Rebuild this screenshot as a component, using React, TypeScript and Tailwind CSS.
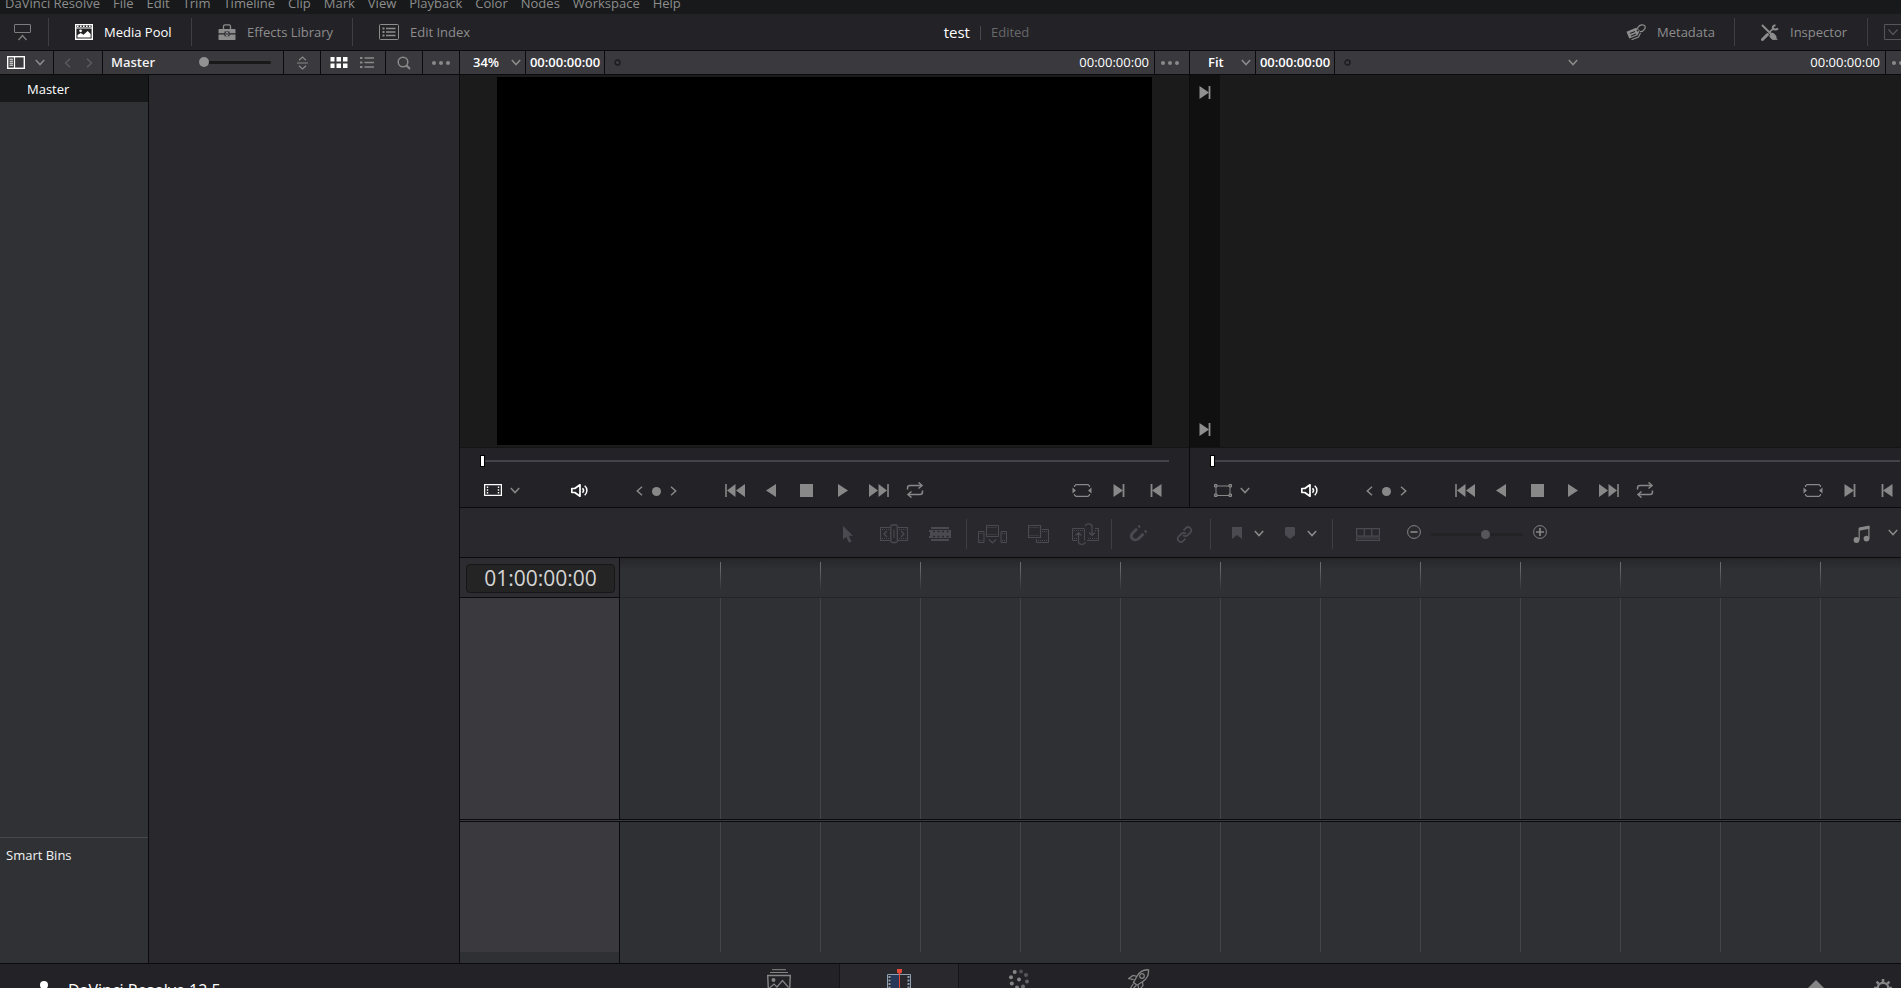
import type { ReactNode } from "react";

type IconProps = { w: number; h: number; children: ReactNode; className?: string };

function Icon({ w, h, children, className = "" }: IconProps) {
  return (
    <svg
      width={w}
      height={h}
      viewBox={`0 0 ${w} ${h}`}
      fill="none"
      stroke="currentColor"
      aria-hidden="true"
      className={`shrink-0 ${className}`}
    >
      {children}
    </svg>
  );
}

const Chevron = ({ className = "text-[#8c8c8c]" }: { className?: string }) => (
  <Icon w={10} h={7} className={className}>
    <path d="M.8 1 5 5.6 9.2 1" strokeWidth="1.5" />
  </Icon>
);

const Dots = () => (
  <Icon w={18} h={4} className="text-[#8a8a8a]">
    <g fill="currentColor" stroke="none">
      <circle cx="2" cy="2" r="2" />
      <circle cx="9" cy="2" r="2" />
      <circle cx="16" cy="2" r="2" />
    </g>
  </Icon>
);

const PoolIcon = () => (
  <Icon w={18} h={16}>
    <path d="M.7.5h16.6v14.8H.7z" strokeWidth="1.4" />
    <path d="M2 2.2h14" strokeWidth="1.6" strokeDasharray="1.6 1.4" />
    <path d="M.7 4h16.6" strokeWidth="1" />
    <path d="M2.5 13.5V11l3.2-2 2.8 1.8 4.2-3.9 2.9 3v3.6z" fill="currentColor" stroke="none" />
    <circle cx="5.6" cy="6.8" r="1.4" fill="currentColor" stroke="none" />
  </Icon>
);

const ToolboxIcon = () => (
  <Icon w={18} h={16}>
    <path d="M5.5 5V2.4C5.5 1.2 6 .8 7 .8h4c1 0 1.5.4 1.5 1.6V5" strokeWidth="1.3" />
    <path d="M1.5 5h15c.7 0 1 .4 1 1v3.3h-6V7.5h-5v1.8h-6V6c0-.6.3-1 1-1z" fill="currentColor" stroke="none" />
    <path d="M.5 10.5h6v1.7h5v-1.7h6V15c0 .6-.3 1-1 1h-15c-.7 0-1-.4-1-1z" fill="currentColor" stroke="none" />
    <path d="M8 8.5h2v3H8z" />
  </Icon>
);

const IndexIcon = () => (
  <Icon w={20} h={16}>
    <rect x=".5" y=".5" width="19" height="15" rx="1" />
    <path d="M3.5 4.5h2M3.5 8h2M3.5 11.5h2" strokeWidth="1.8" />
    <path d="M7 4.5h9.5M7 8h9.5M7 11.5h9.5" strokeWidth="1.5" />
  </Icon>
);

const TagIcon = () => (
  <Icon w={20} h={17}>
    <path d="M.5 7.8 10 3.8l3.800 2.600-2.200 4.800-8.300 3.200z" fill="currentColor" stroke="none" />
    <path d="m4 9.5 5-2M5 12l5-2" stroke="#232227" strokeWidth="1.2" />
    <path d="M5.5 15.800 12.5 13l2-4" strokeWidth="1.100" />
    <path d="M11.5 6.500C11 3.500 13 1 16 .8c3-.2 4 2.200 2.500 4.400-1 1.500-2.800 2.800-4.500 2.300" strokeWidth="1.200" />
    <circle cx="11.6" cy="6.600" r="1" fill="#232227" stroke="none" />
  </Icon>
);

const ToolsIcon = () => (
  <Icon w={18} h={17}>
    <path d="m1 1 9.500 9.500" strokeWidth="1.900" />
    <path d="M9.800 9.300c1-.8 2.600-.5 3.500.4l2.200 2.500-.2 1.600 1.500 2-5 .2c-1.700-1.200-3.200-2.800-3.600-4z" fill="currentColor" stroke="none" />
    <path d="m1.500 15.500 5-5" strokeWidth="3" strokeLinecap="round" />
    <path d="m8.500 8 4-3.700" strokeWidth="1.700" />
    <path d="M14.500 1.200c-1.900.2-3 1.500-2.600 3.100.4 1.500 3.600 1.900 5 .1" strokeWidth="2" />
  </Icon>
);

const NextEdit = () => (
  <Icon w={12} h={13}>
    <path d="M.5 0v13L10 6.500z" fill="currentColor" stroke="none" />
    <path d="M10.500 0v13" strokeWidth="1.800" />
  </Icon>
);
const PrevEdit = () => (
  <Icon w={12} h={13}>
    <path d="M11.500 0v13L2 6.500z" fill="currentColor" stroke="none" />
    <path d="M1.500 0v13" strokeWidth="1.800" />
  </Icon>
);

const iconButton = "flex h-8 shrink-0 items-center justify-center";
const barCell = "flex h-full shrink-0 items-center border-r border-[#0b0b0d]";

function ToolbarButton({ label, icon, className }: { label: string; icon: ReactNode; className: string }) {
  return (
    <button type="button" className={`flex h-7 shrink-0 items-center gap-[11px] pl-[26px] whitespace-nowrap ${className}`}>
      {icon}
      <span className="pt-[2px]">{label}</span>
    </button>
  );
}

const menus = ["DaVinci Resolve", "File", "Edit", "Trim", "Timeline", "Clip", "Mark", "View", "Playback", "Color", "Nodes", "Workspace", "Help"];

function MenuBar() {
  return (
    <nav className="flex h-[14px] shrink-0 items-end gap-[13px] overflow-hidden bg-[#17191a] pb-px pl-[5px] text-[13px] leading-5 text-[#8d8d8d]">
      {menus.map((m) => (
        <button type="button" key={m} className="whitespace-nowrap">
          {m}
        </button>
      ))}
    </nav>
  );
}

function TopBar() {
  return (
    <header className="grid h-[37px] shrink-0 grid-cols-[1fr_auto_1fr] items-center border-b border-[#0b0b0d] bg-[#232227] text-[13px] text-[#8d8d8d]">
      <div className="flex items-center">
        <button type="button" aria-label="Full height" className="flex h-7 w-[49px] items-center border-r border-[#3f3e43] pl-[14px]">
          <Icon w={18} h={17} className="text-[#7d7d7d]">
            <rect x=".5" y=".5" width="16" height="8" rx=".5" />
            <path d="m4.500 16 4-4.500 4 4.500" strokeWidth="1.400" />
          </Icon>
        </button>
        <ToolbarButton label="Media Pool" icon={<PoolIcon />} className="w-[143px] border-r border-[#3f3e43] text-white" />
        <ToolbarButton label="Effects Library" icon={<ToolboxIcon />} className="w-[161px] border-r border-[#3f3e43]" />
        <ToolbarButton label="Edit Index" icon={<IndexIcon />} className="w-[140px]" />
      </div>
      <div className="flex items-center pt-px pl-[53px]">
        <h1 className="text-[15px] font-medium text-white">test</h1>
        <span className="mx-[10px] h-[14px] w-px bg-[#48474c]" />
        <span className="text-[#68686a]">Edited</span>
      </div>
      <div className="flex items-center justify-end">
        <ToolbarButton label="Metadata" icon={<TagIcon />} className="w-[135px] border-r border-[#3f3e43]" />
        <ToolbarButton label="Inspector" icon={<ToolsIcon />} className="w-[133px] border-r border-[#3f3e43]" />
        <button type="button" aria-label="Expand" className="flex h-7 w-[52px] items-center pl-4">
          <Icon w={18} h={16} className="text-[#55555a]">
            <path d="M.5.5h17v15H.5z" />
            <path d="m4.500 5.500 4.500 5 4.500-5" strokeWidth="1.300" />
          </Icon>
        </button>
      </div>
    </header>
  );
}

function PoolBar() {
  return (
    <div className="flex h-6 shrink-0 border-b border-[#0b0b0d] bg-[#39393e] text-[#8a8a8a]">
      <button type="button" aria-label="Bin list" className={`${barCell} w-[54px] gap-[10px] pl-[7px]`}>
        <Icon w={18} h={13} className="text-white">
          <rect x=".7" y=".7" width="16.600" height="11.600" strokeWidth="1.400" />
          <path d="M7.500.5v12" strokeWidth="1.200" />
          <path d="M2.500 3.200H6M2.500 5.200H6M2.500 7.200H6M2.500 9.200H6" />
        </Icon>
        <Chevron />
      </button>
      <div className={`${barCell} w-[49px] gap-[15px] pl-[10px] text-[#5c5d61]`}>
        <button type="button" aria-label="Back">
          <Icon w={7} h={10}>
            <path d="M6 .8 1.500 5 6 9.200" strokeWidth="1.400" />
          </Icon>
        </button>
        <button type="button" aria-label="Forward">
          <Icon w={7} h={10}>
            <path d="M1 .8 5.500 5 1 9.200" strokeWidth="1.400" />
          </Icon>
        </button>
      </div>
      <div className={`${barCell} w-[181px] justify-between pr-3 pl-2`}>
        <h2 className="text-[13px] font-semibold text-[#f2f2f2]">Master</h2>
        <input
          type="range"
          aria-label="Thumbnail size"
          defaultValue={0}
          className="h-[10px] w-[72px] appearance-none bg-transparent [&::-webkit-slider-runnable-track]:h-[3px] [&::-webkit-slider-runnable-track]:rounded-full [&::-webkit-slider-runnable-track]:bg-[#19191a] [&::-webkit-slider-thumb]:-mt-1 [&::-webkit-slider-thumb]:size-[10px] [&::-webkit-slider-thumb]:appearance-none [&::-webkit-slider-thumb]:rounded-full [&::-webkit-slider-thumb]:bg-[#929292]"
        />
      </div>
      <button type="button" aria-label="Sort" className={`${barCell} w-[37px] justify-center`}>
        <Icon w={11} h={14}>
          <path d="M0 7h11M2 4.200 5.500 1 9 4.200M2 9.800 5.500 13 9 9.800" strokeWidth="1.200" />
        </Icon>
      </button>
      <div className={`${barCell} w-[65px] gap-3 pl-[9px]`}>
        <button type="button" aria-label="Thumbnail view">
          <Icon w={18} h={11} className="text-white">
            <g fill="currentColor" stroke="none">
              <path d="M.5 0h4v4.500h-4zM6.500 0h4.500v4.500H6.500zM13 0h4.500v4.500H13zM.5 6.500h4V11h-4zM6.500 6.500h4.500V11H6.500zM13 6.500h4.500V11H13z" />
            </g>
          </Icon>
        </button>
        <button type="button" aria-label="List view">
          <Icon w={14} h={11}>
            <path d="M0 1h2.500M0 5.500h2.500M0 10h2.500" strokeWidth="1.800" />
            <path d="M4.500 1H14M4.500 5.500H14M4.500 10H14" strokeWidth="1.500" />
          </Icon>
        </button>
      </div>
      <button type="button" aria-label="Search" className={`${barCell} w-[37px] justify-center`}>
        <Icon w={14} h={14}>
          <circle cx="6" cy="6" r="4.800" strokeWidth="1.500" />
          <path d="m9.300 9.300 3.700 3.700" strokeWidth="2" />
        </Icon>
      </button>
      <button type="button" aria-label="Pool options" className="flex flex-1 items-center justify-center">
        <Dots />
      </button>
    </div>
  );
}

function MediaPool() {
  return (
    <aside className="flex w-[460px] shrink-0 flex-col border-r border-[#0b0b0d]">
      <PoolBar />
      <div className="flex min-h-0 flex-1">
        <div className="flex w-[149px] shrink-0 flex-col border-r border-[#0b0b0d] bg-[#2f3135] text-[13px] text-[#f2f2f2]">
          <button type="button" className="h-[27px] shrink-0 bg-[#17191a] pt-[2px] pl-[27px] text-left text-white">
            Master
          </button>
          <div className="flex-1" />
          <section className="h-[126px] shrink-0 border-t border-[#46474b] px-[6px] pt-2">
            <h3>Smart Bins</h3>
          </section>
        </div>
        <div className="flex-1 bg-[#29282d]" />
      </div>
    </aside>
  );
}

function ViewerBar({ zoom, name, picker }: { zoom: string; name: string; picker: boolean }) {
  return (
    <div className="flex h-6 shrink-0 border-b border-[#0b0b0d] bg-[#39393e] text-[13px] text-white">
      <div className={`${barCell} relative w-[66px]`}>
        <select
          aria-label={`${name} zoom`}
          defaultValue={zoom}
          className={`h-full w-full appearance-none bg-transparent font-semibold ${picker ? "pl-[18px]" : "pl-[13px]"}`}
        >
          <option>{zoom}</option>
        </select>
        <span className="pointer-events-none absolute inset-y-0 right-1 flex items-center">
          <Chevron />
        </span>
      </div>
      <span className={`${barCell} w-[79px] justify-center font-semibold`}>00:00:00:00</span>
      <div className={`${barCell} flex-1 !shrink justify-between pr-[5px] pl-[9px]`}>
        <Icon w={7} h={7} className="text-[#1c1c1e]">
          <circle cx="3.500" cy="3.500" r="2.500" strokeWidth="1.400" />
        </Icon>
        {picker && (
          <button type="button" aria-label="Choose timeline" className="mr-4">
            <Chevron />
          </button>
        )}
        <span className="font-medium">00:00:00:00</span>
      </div>
      <button type="button" aria-label={`${name} options`} className="flex w-[34px] shrink-0 items-center pl-[6px]">
        <Dots />
      </button>
    </div>
  );
}

function Transport({ mode, name }: { mode: ReactNode; name: string }) {
  return (
    <div className="flex h-[61px] shrink-0 flex-col border-y border-t-[#141416] border-b-[#0b0b0d] bg-[#232227] text-[#888888]">
      <input
        type="range"
        aria-label={`${name} position`}
        defaultValue={0}
        className="mx-[20px] mt-[7px] h-3 appearance-none bg-transparent [&::-webkit-slider-runnable-track]:h-[2px] [&::-webkit-slider-runnable-track]:bg-[#43444b] [&::-webkit-slider-thumb]:-mt-[5px] [&::-webkit-slider-thumb]:h-3 [&::-webkit-slider-thumb]:w-[5px] [&::-webkit-slider-thumb]:appearance-none [&::-webkit-slider-thumb]:border [&::-webkit-slider-thumb]:border-black [&::-webkit-slider-thumb]:bg-white"
      />
      <div className="mt-[7px] grid grid-cols-[1fr_auto_1fr] items-center">
        <div className="flex items-center pl-[23px]">
          <button type="button" aria-label="Display mode" className={`${iconButton} w-5`}>
            {mode}
          </button>
          <button type="button" aria-label="Display mode menu" className={`${iconButton} w-6`}>
            <Chevron className="text-[#888888]" />
          </button>
          <button type="button" aria-label="Mute" className={`${iconButton} ml-[43px] w-5 text-white`}>
            <Icon w={18} h={13}>
              <path d="M.8 4.500h3L9 .8v11.400L3.800 8.500h-3z" strokeWidth="1.700" strokeLinejoin="round" />
              <path d="M11.500 4.300c1.200 1.200 1.200 3.200 0 4.400M13.700 1.800c2.900 2.500 2.900 6.900 0 9.400" strokeWidth="1.500" />
            </Icon>
          </button>
          <div className="ml-[41px] flex items-center pt-[2px]">
            <button type="button" aria-label="Previous marker" className="flex w-[17px] justify-center">
              <Icon w={7} h={10}>
                <path d="M6 .8 1.300 5 6 9.200" strokeWidth="1.500" />
              </Icon>
            </button>
            <button type="button" aria-label="Jog" className="flex w-[17px] justify-center">
              <span className="size-[9px] rounded-full bg-[#888888]" />
            </button>
            <button type="button" aria-label="Next marker" className="flex w-[17px] justify-center">
              <Icon w={7} h={10}>
                <path d="M1 .8 5.700 5 1 9.200" strokeWidth="1.500" />
              </Icon>
            </button>
          </div>
        </div>
        <div className="flex items-center">
          <button type="button" aria-label="Go to start" className={`${iconButton} w-9`}>
            <Icon w={20} h={13}>
              <path d="M10.500 0v13L2 6.500zM20 0v13l-9-6.500z" fill="currentColor" stroke="none" />
              <path d="M1 0v13" strokeWidth="1.600" />
            </Icon>
          </button>
          <button type="button" aria-label="Play reverse" className={`${iconButton} w-9`}>
            <Icon w={10} h={13}>
              <path d="M10 0v13L0 6.500z" fill="currentColor" stroke="none" />
            </Icon>
          </button>
          <button type="button" aria-label="Stop" className={`${iconButton} w-9`}>
            <span className="size-[13px] bg-[#888888]" />
          </button>
          <button type="button" aria-label="Play" className={`${iconButton} w-9`}>
            <Icon w={10} h={13}>
              <path d="M0 0v13l10-6.500z" fill="currentColor" stroke="none" />
            </Icon>
          </button>
          <button type="button" aria-label="Go to end" className={`${iconButton} w-9`}>
            <Icon w={20} h={13}>
              <path d="M0 0v13l9-6.500zM9.500 0v13l8.500-6.500z" fill="currentColor" stroke="none" />
              <path d="M19 0v13" strokeWidth="1.600" />
            </Icon>
          </button>
          <button type="button" aria-label="Loop" className={`${iconButton} w-9`}>
            <Icon w={18} h={16}>
              <path d="M1.500 7.500V6c0-1.500.8-2.500 2.500-2.500h12M16.500 8.500V10c0 1.500-.8 2.500-2.500 2.500H2" strokeWidth="1.500" />
              <path d="m12.500.5 3.500 3-3.500 3M5.500 9.500 2 12.500l3.500 3" strokeWidth="1.500" />
            </Icon>
          </button>
        </div>
        <div className="flex items-center justify-end pr-[15px]">
          <button type="button" aria-label="Match frame" className={`${iconButton} w-[37px]`}>
            <Icon w={20} h={13}>
              <path d="M2.500 3V2L4 .6h12L17.500 2v1M2.500 10v1L4 12.400h12l1.500-1.400v-1" strokeWidth="1.200" />
              <path d="M.5 3.500v6l3.500-3zM19.500 3.500v6L16 6.500z" fill="currentColor" stroke="none" />
            </Icon>
          </button>
          <button type="button" aria-label="Next edit" className={`${iconButton} w-[37px]`}>
            <NextEdit />
          </button>
          <button type="button" aria-label="Previous edit" className={`${iconButton} w-[37px]`}>
            <PrevEdit />
          </button>
        </div>
      </div>
    </div>
  );
}

const FilmMode = () => (
  <Icon w={18} h={12} className="text-white">
    <rect x=".6" y=".6" width="16.800" height="10.800" strokeWidth="1.300" />
    <path d="M3.500 2.500v8M14.500 2.500v8" strokeWidth="1.400" strokeDasharray="1.400 1.400" />
  </Icon>
);

const BoxMode = () => (
  <Icon w={18} h={13}>
    <path d="M2 2h14v9.500H2z" />
    <path d="M.5.5H3V3H.5zM15 .5h2.500V3H15zM.5 10H3v2.500H.5zM15 10h2.500v2.500H15z" fill="#5a5a5d" />
  </Icon>
);

function Viewers() {
  return (
    <div className="flex min-h-0 flex-[457]">
      <section className="flex w-1/2 flex-col border-r border-[#0b0b0d]">
        <ViewerBar zoom="34%" name="Source" picker={false} />
        <div className="flex min-h-0 flex-1 justify-center bg-[#1b1b1b] py-[2px]">
          <div className="aspect-video h-full bg-black" />
        </div>
        <Transport name="Source" mode={<FilmMode />} />
      </section>
      <section className="flex w-1/2 flex-col">
        <ViewerBar zoom="Fit" name="Timeline" picker />
        <div className="flex min-h-0 flex-1 bg-[#1b1b1b]">
          <div className="flex w-[30px] flex-col items-center justify-between bg-[#101010] py-[11px] text-[#8f8f8f]">
            <button type="button" aria-label="Next clip">
              <NextEdit />
            </button>
            <button type="button" aria-label="Last clip">
              <NextEdit />
            </button>
          </div>
        </div>
        <Transport name="Timeline" mode={<BoxMode />} />
      </section>
    </div>
  );
}

const Rule = () => <span className="h-[30px] w-px bg-[#3f3e43]" />;

function EditTools() {
  return (
    <div className="grid h-[50px] shrink-0 grid-cols-[1fr_auto_1fr] items-center border-b border-[#0b0b0d] bg-[#29282d] pt-[3px] text-[#4b4a50]">
      <span />
      <div className="flex items-center">
        <button type="button" aria-label="Selection" className={`${iconButton} w-9`}>
          <Icon w={12} h={17}>
            <path d="M1 0v13.500l3.200-2.800 2.800 6 2.500-1.200-2.700-5.800H11z" fill="currentColor" stroke="none" />
          </Icon>
        </button>
        <button type="button" aria-label="Trim edit" className={`${iconButton} w-14`}>
          <Icon w={28} h={20}>
            <path d="M10 3.500H.5v13H10M18 3.500h9.500v13H18" strokeWidth="1.200" />
            <path d="M2 5.500h8M2 14.500h8M19 5.500h7M19 14.500h7" strokeDasharray="1 1" />
            <rect x="10.800" y="1" width="6.500" height="17.500" rx="1.500" strokeWidth="1.300" />
            <path d="M14 5.500v8.500" />
            <path d="M7 7 4 10l3 3M21 7l3 3-3 3" strokeWidth="1.300" />
          </Icon>
        </button>
        <button type="button" aria-label="Blade" className={`${iconButton} mr-2 w-9`}>
          <Icon w={22} h={14}>
            <path d="M2 1h18M2 13h18" strokeWidth="2" />
            <path d="M0 3h22v8H0V9h1V5H0z" fill="currentColor" stroke="none" />
            <path d="M4 4.500h16M4 9.500h16" stroke="#29282d" strokeWidth="1.500" strokeDasharray="2 2.500" />
          </Icon>
        </button>
        <Rule />
        <button type="button" aria-label="Insert clip" className={`${iconButton} w-[51px]`}>
          <Icon w={29} h={19}>
            <path d="M8.500.5h12v11h-12zM.5 6.500h5.500v11H.5zM23 6.500h5.500v11H23z" />
            <path d="M9.500 2.500h10M9.500 9.500h10M1.500 8.500h4M1.500 15.500h4M24 8.500h4M24 15.500h4" strokeDasharray="1 1" />
            <path d="m11 14.500 3.500 3.500 3.500-3.500" strokeWidth="1.200" />
          </Icon>
        </button>
        <button type="button" aria-label="Overwrite clip" className={`${iconButton} w-[41px]`}>
          <Icon w={21} h={18}>
            <path d="M.5.5h12v12H.5z" strokeWidth="1.200" />
            <path d="M1.500 2.500h10M1.500 10.500h10" strokeDasharray="1 1" />
            <path d="M14 4.500h6.500v13h-12V14" />
            <path d="M14 6.500h6M10 15.500h10" strokeDasharray="1 1" />
          </Icon>
        </button>
        <button type="button" aria-label="Replace clip" className={`${iconButton} w-[52px]`}>
          <Icon w={27} h={22}>
            <path d="M12 5.500H.5v12H5M15 17.500h11.500v-12H23M12.500 5.500v12" />
            <path d="M2 7.500h10M2 15.500h3M16 15.500h10M23 7.500h3" strokeDasharray="1 1" />
            <path d="M6.500 20V10M3.500 12.500l3-3 3 3M6.500 19.500c1 2.500 6 2.500 7-.5M20 2v10M17 9.500l3 3 3-3M20 3.500c-.5-3.500-6-3.500-7-.5" strokeWidth="1.200" />
          </Icon>
        </button>
        <Rule />
        <button type="button" aria-label="Snapping" className={`${iconButton} w-[53px]`}>
          <Icon w={18} h={18}>
            <path d="M7 3.700 3 7.700c-2 2-2 4.500-.5 6.100 1.600 1.600 4.200 1.600 6.200-.3l4.800-4.800" strokeWidth="2.800" />
            <path d="m8.500 2.200 1.400-1.400M15 7.200l1.400-1.400" strokeWidth="2.800" />
          </Icon>
        </button>
        <button type="button" aria-label="Link" className={`${iconButton} mr-[7px] w-[38px]`}>
          <Icon w={17} h={17}>
            <path d="m7.500 4.500 2.200-2.300c1.400-1.400 3.300-1.400 4.600-.2 1.300 1.300 1.300 3.200 0 4.600l-2.600 2.600c-1.400 1.400-3.400 1.300-4.600 0" strokeWidth="1.700" />
            <path d="m9.500 12.500-2.200 2.300c-1.400 1.400-3.300 1.400-4.600.2-1.300-1.300-1.300-3.200 0-4.600l2.600-2.600c1.400-1.400 3.400-1.300 4.600 0" strokeWidth="1.700" />
          </Icon>
        </button>
        <Rule />
        <button type="button" aria-label="Flag" className={`${iconButton} gap-3 pb-[2px] pl-[21px]`}>
          <Icon w={10} h={12}>
            <path d="M0 0h10v12L5 8l-5 4z" fill="currentColor" stroke="none" />
          </Icon>
          <Chevron />
        </button>
        <button type="button" aria-label="Marker" className={`${iconButton} mr-[15px] gap-3 pb-[2px] pl-[21px]`}>
          <Icon w={10} h={12}>
            <path d="M1 0h8l1 1v7l-5 4-5-4V1z" fill="currentColor" stroke="none" />
          </Icon>
          <Chevron />
        </button>
        <Rule />
        <button type="button" aria-label="Timeline view" className={`${iconButton} ml-[23px]`}>
          <Icon w={24} h={13}>
            <path d="M.6.6h22.800v7.500H.6zM8.300.6v7.500M15.700.6v7.500M.6 10h22.800v2.400H.6z" strokeWidth="1.200" />
          </Icon>
        </button>
        <button type="button" aria-label="Zoom out" className={`${iconButton} ml-[27px] pb-1 text-[#858585]`}>
          <Icon w={14} h={14}>
            <circle cx="7" cy="7" r="6.400" />
            <path d="M3.500 7h7" strokeWidth="1.700" />
          </Icon>
        </button>
        <input
          type="range"
          aria-label="Timeline zoom"
          defaultValue={60}
          className="mx-[10px] h-[10px] w-[92px] appearance-none bg-transparent [&::-webkit-slider-runnable-track]:h-[3px] [&::-webkit-slider-runnable-track]:rounded-full [&::-webkit-slider-runnable-track]:bg-[#232225] [&::-webkit-slider-thumb]:-mt-[3px] [&::-webkit-slider-thumb]:size-[9px] [&::-webkit-slider-thumb]:appearance-none [&::-webkit-slider-thumb]:rounded-full [&::-webkit-slider-thumb]:bg-[#57565b]"
        />
        <button type="button" aria-label="Zoom in" className={`${iconButton} mr-[3px] pb-1 text-[#858585]`}>
          <Icon w={14} h={14}>
            <circle cx="7" cy="7" r="6.400" />
            <path d="M3 7h8M7 3v8" strokeWidth="1.700" />
          </Icon>
        </button>
      </div>
      <button type="button" aria-label="Audio" className="flex h-8 items-center gap-[18px] justify-self-end pr-[22px] text-[#888888]">
        <Icon w={17} h={18}>
          <path d="M6 2.500 16.500.5v3.300L6 5.800z" fill="currentColor" stroke="none" />
          <path d="M6.200 3v11.500M15.900 2v11.500" strokeWidth="1.200" />
          <circle cx="3.500" cy="15" r="2.900" fill="currentColor" stroke="none" />
          <circle cx="13.500" cy="13.600" r="2.900" fill="currentColor" stroke="none" />
        </Icon>
        <Chevron className="mb-1" />
      </button>
    </div>
  );
}

const laneLines =
  "ml-[100px] h-full bg-[linear-gradient(to_right,#434448_1px,transparent_1px)] bg-size-[100px_100%]";

function Timeline() {
  return (
    <section className="flex min-h-0 flex-[405] flex-col bg-[#2f3034]">
      <div className="flex h-10 shrink-0">
        <div className="w-[160px] shrink-0 border-r border-b border-[#0b0b0d] bg-[#2d2d31] pt-[6px] pr-1 pl-[6px]">
          <div className="flex h-[29px] items-center justify-center rounded-[4px] border border-[#161617] bg-[#242424] text-[21px] text-[#d4d4d4]">
            01:00:00:00
          </div>
        </div>
        <div className="min-w-0 flex-1 border-b border-[#252528] bg-linear-to-b from-[#27272a] to-[#2f3034] to-30% pt-1 pb-[6px]">
          <div className="ml-[100px] h-full bg-[linear-gradient(to_right,#6a6b6f_1px,transparent_1px)] bg-size-[100px_100%] mask-linear-180 mask-linear-from-20% mask-linear-to-100%" />
        </div>
      </div>
      <div className="flex min-h-0 flex-[221]">
        <div className="w-[160px] shrink-0 border-r border-[#0b0b0d] bg-[#39393e]" />
        <div className="min-w-0 flex-1">
          <div className={laneLines} />
        </div>
      </div>
      <div className="h-[3px] shrink-0 border-y border-[#0b0b0d] bg-[#39393e]" />
      <div className="flex min-h-0 flex-[130]">
        <div className="w-[160px] shrink-0 border-r border-[#0b0b0d] bg-[#39393e]" />
        <div className="min-w-0 flex-1">
          <div className={laneLines} />
        </div>
      </div>
      <div className="h-[11px] w-[160px] shrink-0 border-r border-[#0b0b0d]" />
    </section>
  );
}

const pageTab = "flex h-full w-[120px] justify-center pt-[5px]";

function PageBar() {
  return (
    <footer className="grid h-[25px] shrink-0 grid-cols-[1fr_auto_1fr] overflow-hidden border-t border-[#0b0b0d] bg-[#232227] text-[#858585]">
      <div className="flex items-start gap-[20px] pl-10 text-white">
        <Icon w={8} h={8} className="mt-[17px]">
          <circle cx="4" cy="4" r="4" fill="currentColor" stroke="none" />
        </Icon>
        <span className="pt-[14px] text-base leading-6 whitespace-nowrap">DaVinci Resolve 12.5</span>
      </div>
      <div className="flex pr-[2px]">
        <button type="button" aria-label="Media" className={pageTab}>
          <Icon w={24} h={24}>
            <path d="M5 .7h14" />
            <path d="M3 3.500h18" />
            <path d="M.7 6.500h22.600l-.8 17h-21z" strokeWidth="1.400" />
            <circle cx="6.500" cy="11" r="2" fill="currentColor" stroke="none" />
            <path d="m2.500 19 4.500-4 3 3 5.500-6.500 6 7" strokeWidth="1.200" />
          </Icon>
        </button>
        <button type="button" aria-label="Edit" className={`${pageTab} border-x border-[#161618] bg-[#29282d]`}>
          <Icon w={24} h={24}>
            <path d="M.5 5.500h23v18H.5z" stroke="#8ea0b4" />
            <path d="M4 6h8v18H4z" fill="#26395a" stroke="none" />
            <path d="M2.500 7v17M21.500 7v17" stroke="#8ea0b4" strokeWidth="2" strokeDasharray="2 1.500" />
            <path d="M10 0h5v3.500L12.500 5 10 3.500zM12 4h1v20h-1z" fill="#e5493a" stroke="none" />
          </Icon>
        </button>
        <button type="button" aria-label="Color" className={pageTab}>
          <Icon w={20} h={24}>
            <g fill="currentColor" stroke="none">
              <circle cx="12" cy="2.500" r="2" opacity=".45" />
              <circle cx="17" cy="6" r="2" opacity=".55" />
              <circle cx="18" cy="12.500" r="2" opacity=".65" />
              <circle cx="14" cy="17.500" r="2" opacity=".75" />
              <circle cx="8" cy="18.500" r="2" />
              <circle cx="2.800" cy="14.500" r="2" />
              <circle cx="2" cy="8.200" r="2" />
              <circle cx="5.700" cy="3" r="2" />
              <circle cx="10" cy="10.500" r="2" />
            </g>
          </Icon>
        </button>
        <button type="button" aria-label="Deliver" className={pageTab}>
          <Icon w={22} h={24}>
            <path d="M20.500.8c-5-.3-9 2-11.500 6.500l-3.500 6 3.500 3 5.500-3.500c4.300-2.800 6.500-7 6-12z" strokeWidth="1.300" />
            <circle cx="14" cy="7" r="2.300" strokeWidth="1.200" />
            <path d="M9 7.300 5 6.500.8 9.500l5 1.200M14.500 12.800l.5 3.700-4 5-1-5.500M5.500 14.500 2.500 19M8 16.500 4 21" strokeWidth="1.200" />
          </Icon>
        </button>
      </div>
      <div className="flex items-start justify-end gap-[50px] pr-7">
        <button type="button" aria-label="Project manager" className="pt-4">
          <Icon w={16} h={8}>
            <path d="M8 0 0 8h16z" fill="currentColor" stroke="none" />
          </Icon>
        </button>
        <button type="button" aria-label="Project settings" className="pt-[15px]">
          <Icon w={18} h={18}>
            <circle cx="9" cy="9" r="5.200" strokeWidth="2.200" />
            <path d="M9 3V0M9 15v3M3 9H0M15 9h3M4.800 4.800 2.600 2.600M13.200 4.800l2.200-2.200M4.800 13.200l-2.200 2.200M13.200 13.200l2.200 2.200" strokeWidth="2.600" />
          </Icon>
        </button>
      </div>
    </footer>
  );
}

export default function App() {
  return (
    <div className="h-screen overflow-hidden bg-[#232227] font-['Open_Sans',sans-serif]">
      <div className="flex h-full w-[calc(100%+19px)] flex-col">
        <MenuBar />
        <TopBar />
        <main className="flex min-h-0 flex-1">
          <MediaPool />
          <div className="flex min-w-0 flex-1 flex-col">
            <Viewers />
            <EditTools />
            <Timeline />
          </div>
        </main>
        <PageBar />
      </div>
    </div>
  );
}
